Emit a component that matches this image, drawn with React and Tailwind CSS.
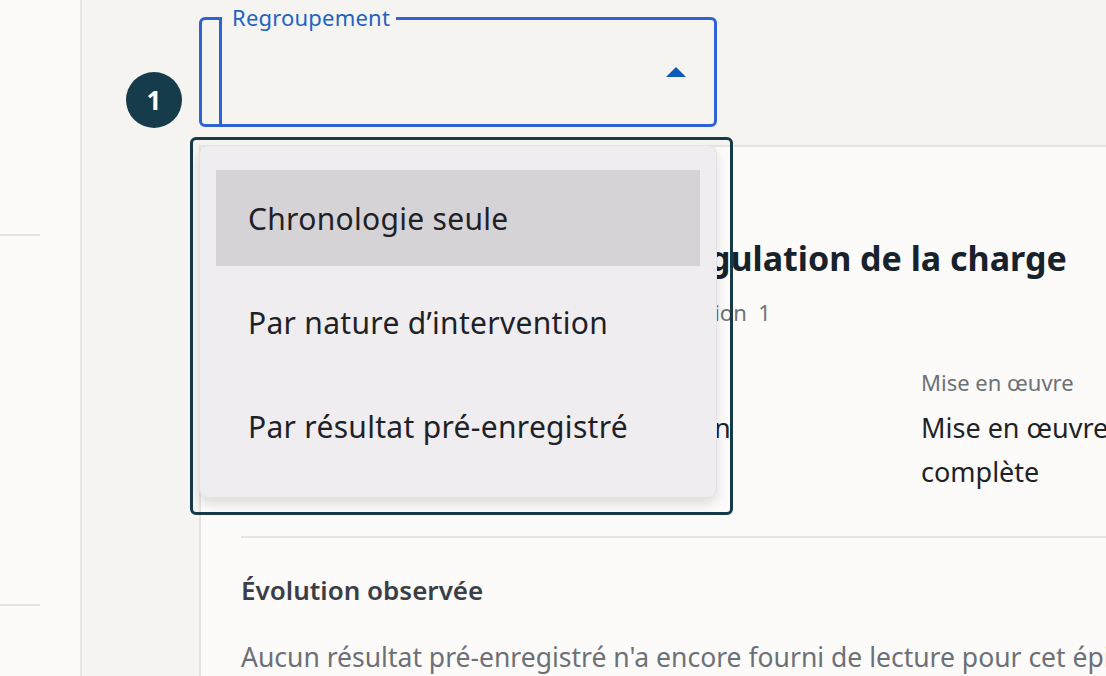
import React from "react";

const font = { fontFamily: '"Noto Sans", "Liberation Sans", sans-serif' };

/** the caret of the open select */
function CaretUp() {
  return (
    <svg width="20" height="11" viewBox="0 0 20 11" className="block">
      <path d="M0 11 L10 1 L20 11 Z" fill="#0b5cb5" />
    </svg>
  );
}

/** options of the open list */
const options = ["Chronologie seule", "Par nature d’intervention", "Par résultat pré-enregistré"];

function GroupingSelect() {
  return (
    <div className="relative w-[518px] h-[110px]">
      {/* numbered annotation */}
      <div className="absolute left-[-73px] top-[55px] w-[56px] h-[56px] rounded-full bg-[#163b4b] flex items-center justify-center">
        <span className="text-white text-[26px] font-bold leading-none">1</span>
      </div>

      <div className="h-full flex border-[3px] border-[#2f63d5] rounded-[6px]">
        <div className="w-[20px] h-full border-r-[3px] border-[#2f63d5]" />
        <div className="flex-1 flex items-center justify-end pr-[28px] pb-[2px]">
          <CaretUp />
        </div>
      </div>
      <span className="absolute left-[23px] top-[-14px] pl-[10px] pr-[6px] bg-[#f5f4f1] text-[#1d63c3] text-[22px] tracking-[0.2px] leading-[28px]">
        Regroupement
      </span>

      {/* open list with its highlight frame */}
      <div className="absolute left-[-9px] top-[120px] w-[543px] h-[378px] border-[3px] border-[#173a48] rounded-[6px] z-10">
        <div className="ml-[6px] mt-[5px] w-[518px] rounded-[9px] bg-[#efedf0] shadow-[0_6px_12px_rgba(0,0,0,0.12)] border border-[#e4e2e4] px-[16px] pt-[24px] pb-[23px] flex flex-col gap-[8px]">
          {options.map((o, i) => (
            <div
              key={o}
              className={`h-[96px] flex items-center px-[32px] text-[30px] tracking-[0.3px] text-[#1e2126] ${i === 0 ? "bg-[#d5d3d6]" : ""}`}
            >
              {o}
            </div>
          ))}
        </div>
      </div>
    </div>
  );
}

function Field({ label, value }) {
  return (
    <div className="flex flex-col">
      <p className="text-[22px] leading-[28px] text-[#6d7177] whitespace-nowrap">{label}</p>
      <p className="mt-[10px] text-[27px] leading-[44px] text-[#1e2328] whitespace-nowrap">{value}</p>
    </div>
  );
}

export default function App() {
  return (
    <div className="w-[1106px] h-[676px] flex overflow-hidden bg-[#f5f4f1]" style={font}>
      {/* side rail */}
      <div className="w-[82px] h-full shrink-0 bg-[#fcfbf9] border-r-2 border-[#e8e6e2] flex flex-col">
        <div className="mt-[234px] w-[40px] border-t-2 border-[#e4e2df]" />
        <div className="mt-[368px] w-[40px] border-t-2 border-[#e4e2df]" />
      </div>

      <div className="flex-1 flex flex-col min-w-0">
        <div className="pl-[117px] pt-[17px] pb-[18px]">
          <GroupingSelect />
        </div>

        <div className="ml-[117px] flex-1 bg-[#fcfbf9] border-l-2 border-t-2 border-[#e5e3df] pl-[40px] pt-[90px] min-w-0 overflow-hidden">
          <h1 className="text-[34px] leading-[42px] font-bold text-[#17222c] whitespace-nowrap">
            Intervention ciblée n° 1 · Régulation de la charge
          </h1>
          <p className="mt-[19px] text-[22px] leading-[28px] text-[#6f7378] whitespace-nowrap">
            Domaines : charges de travail · Ordre d'exécution&nbsp; 1
          </p>

          <div className="mt-[42px] grid grid-cols-[300px_380px_300px] w-max">
            <Field label="Catégorie" value="Charge de travail" />
            <Field label="Statut" value="En observation" />
            <Field label="Mise en œuvre" value={<>Mise en œuvre<br />complète</>} />
          </div>

          <div className="mt-[42px] border-t-2 border-[#e7e5e1]" />

          <h2 className="mt-[35px] text-[26px] leading-[34px] font-semibold text-[#3a3f47] whitespace-nowrap">
            Évolution observée
          </h2>
          <p className="mt-[33px] text-[26.5px] leading-[34px] text-[#6c7077] whitespace-nowrap">
            Aucun résultat pré-enregistré n'a encore fourni de lecture pour cet épisode d'intervention.
          </p>
        </div>
      </div>
    </div>
  );
}
